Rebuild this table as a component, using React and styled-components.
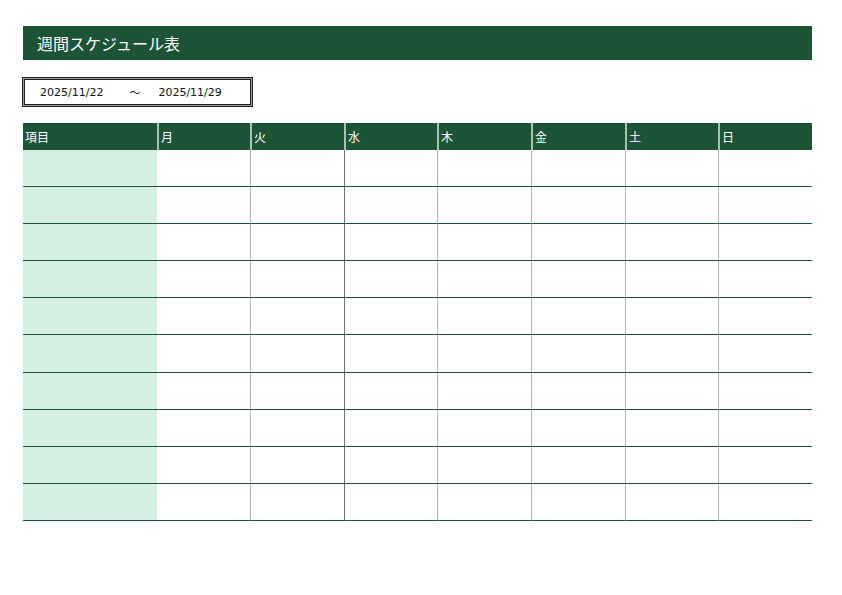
import styled, { createGlobalStyle } from "styled-components";

const GlobalStyle = createGlobalStyle`
  body {
    margin: 0;
    background: #ffffff;
    font-family: "Noto Sans CJK JP", "Noto Sans", sans-serif;
  }
`;

const Page = styled.div`
  width: 842px;
  height: 595px;
  padding: 26px 0 0 23px;
  box-sizing: border-box;
`;

const TitleBar = styled.div`
  width: 789px;
  height: 34px;
  background: #1d5337;
  color: #ffffff;
  display: flex;
  align-items: center;
  padding-left: 14px;
  box-sizing: border-box;
  font-size: 16px;
`;

const DateBox = styled.div`
  margin-top: 19px;
  width: 227px;
  height: 26px;
  margin-left: 1px;
  border: 1px solid #222222;
  box-shadow: 0 0 0 1px #9a9a9a, 0 0 0 2px #222222;
  display: flex;
  align-items: center;
  font-family: "DejaVu Sans", "Liberation Sans", sans-serif;
  font-size: 11px;
  color: #111111;
  box-sizing: border-box;
`;

const DateText = styled.span`
  margin-left: ${(props) => props.left}px;
`;

const Tilde = styled.span`
  margin-left: 26px;
  font-family: "Noto Sans CJK JP", sans-serif;
  font-size: 11px;
`;

const Table = styled.div`
  margin-top: 18px;
  width: 789px;
  display: grid;
  grid-template-columns: 134px 93px 94px 93px 94px 94px 93px 94px;
  grid-template-rows: 27px repeat(10, 37.1px);
`;

const HeadCell = styled.div`
  background: #1d5337;
  color: #ffffff;
  font-size: 12px;
  display: flex;
  align-items: center;
  padding-left: 2px;
  box-sizing: border-box;
  border-left: ${(props) => (props.first ? "none" : "2px solid #a9c0b2")};
`;

const Cell = styled.div`
  background: ${(props) => (props.label ? "#d4f0e2" : "#ffffff")};
  border-bottom: 1px solid #1d5337;
  border-left: ${(props) => props.line};
  box-sizing: border-box;
`;

const days = ["項目", "月", "火", "水", "木", "金", "土", "日"];

const lineFor = (i) => {
  if (i < 2) return "none";
  if (i === 3) return "1px solid #6e6e6e";
  return "1px solid #b4b4b4";
};

export default function App() {
  const rows = Array.from({ length: 10 });
  return (
    <Page>
      <GlobalStyle />
      <TitleBar>週間スケジュール表</TitleBar>
      <DateBox>
        <DateText left={15}>2025/11/22</DateText>
        <Tilde>～</Tilde>
        <DateText left={18}>2025/11/29</DateText>
      </DateBox>
      <Table>
        {days.map((d, i) => (
          <HeadCell key={d} first={i === 0}>
            {d}
          </HeadCell>
        ))}
        {rows.map((_, r) =>
          days.map((d, i) => (
            <Cell key={r + "-" + i} label={i === 0} line={lineFor(i)} />
          ))
        )}
      </Table>
    </Page>
  );
}
